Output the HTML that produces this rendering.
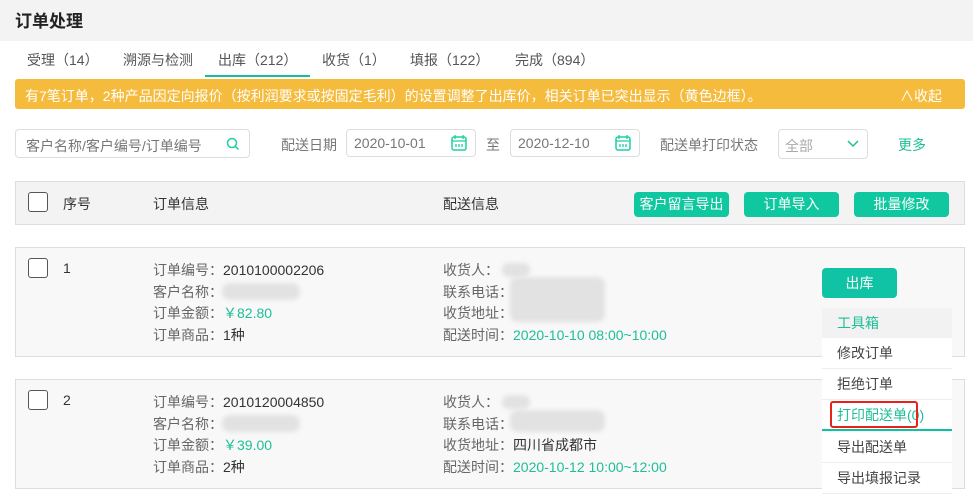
<!DOCTYPE html>
<html><head><meta charset="utf-8"><style>
*{margin:0;padding:0;box-sizing:border-box}
html,body{width:973px;height:502px;overflow:hidden}
body{background:#fff;font-family:"Liberation Sans","Noto Sans CJK SC",sans-serif;font-size:14px;color:#333;position:relative}
.a{position:absolute;white-space:nowrap}
.g{color:#666}
.t{color:#1dbf98}
.btn{position:absolute;background:#0fc8a0;color:#fff;border-radius:4px;text-align:center}
.inp{position:absolute;border:1px solid #ddd;border-radius:4px;background:#fff}
.cb{position:absolute;width:20px;height:20px;border:1.5px solid #555;border-radius:3px;background:#fff}
.blur{position:absolute;background:#e2e2e2;border-radius:8px;filter:blur(2px)}
.mi{position:absolute;left:822px;width:130px;height:31px;background:#fff;border-bottom:1px solid #eee;padding-left:15px;line-height:30px;color:#444}
</style></head><body>
<div class="a" style="left:0;top:0;width:973px;height:41px;background:#f3f3f3"></div>
<div class="a" style="left:15px;top:7px;font-size:17px;font-weight:bold;color:#222">订单处理</div>
<div class="a g" style="left:27px;top:50px;color:#555">受理（14）</div>
<div class="a g" style="left:123px;top:50px;color:#555">溯源与检测</div>
<div class="a" style="left:218px;top:50px;color:#555">出库（212）</div>
<div class="a" style="left:205px;top:75px;width:105px;height:2px;background:#10c0a0"></div>
<div class="a g" style="left:322px;top:50px;color:#555">收货（1）</div>
<div class="a g" style="left:410px;top:50px;color:#555">填报（122）</div>
<div class="a g" style="left:515px;top:50px;color:#555">完成（894）</div>
<div class="a" style="left:15px;top:79px;width:950px;height:30px;background:#f5bb3c;border-radius:3px"></div>
<div class="a" style="left:25px;top:86px;color:#fff;font-size:14px">有7笔订单，2种产品因定向报价（按利润要求或按固定毛利）的设置调整了出库价，相关订单已突出显示（黄色边框）。</div>
<div class="a" style="left:900px;top:86px;color:#fff">∧收起</div>
<div class="inp" style="left:15px;top:129px;width:235px;height:29px"></div>
<div class="a" style="left:26px;top:136px;color:#777">客户名称/客户编号/订单编号</div>
<svg class="a" style="left:226px;top:137px" width="14" height="14"><circle cx="6" cy="6" r="4.5" fill="none" stroke="#1dd0a0" stroke-width="1.5"/><path d="M9.5 9.5L12.5 12.5" stroke="#1dd0a0" stroke-width="1.5"/></svg>
<div class="a g" style="left:281px;top:135px;color:#777">配送日期</div>
<div class="inp" style="left:346px;top:129px;width:130px;height:28px"></div>
<div class="a" style="left:354px;top:135px;color:#777">2020-10-01</div>
<svg class="a" style="left:451px;top:134px" width="16" height="17"><rect x="1" y="3" width="14" height="13" rx="2" fill="none" stroke="#1dd0a0" stroke-width="1.5"/><path d="M4 1v4M12 1v4M1 7h14M5 10v3M8 10v3M11 10v3" stroke="#1dd0a0" stroke-width="1.3"/></svg>
<div class="a" style="left:486px;top:135px;color:#777">至</div>
<div class="inp" style="left:510px;top:129px;width:130px;height:28px"></div>
<div class="a" style="left:518px;top:135px;color:#777">2020-12-10</div>
<svg class="a" style="left:615px;top:134px" width="16" height="17"><rect x="1" y="3" width="14" height="13" rx="2" fill="none" stroke="#1dd0a0" stroke-width="1.5"/><path d="M4 1v4M12 1v4M1 7h14M5 10v3M8 10v3M11 10v3" stroke="#1dd0a0" stroke-width="1.3"/></svg>
<div class="a" style="left:660px;top:135px;color:#777">配送单打印状态</div>
<div class="inp" style="left:778px;top:129px;width:90px;height:30px"></div>
<div class="a" style="left:785px;top:136px;color:#aaa">全部</div>
<svg class="a" style="left:847px;top:140px" width="12" height="8"><path d="M1 1l5 5 5-5" fill="none" stroke="#1dbf98" stroke-width="1.5"/></svg>
<div class="a t" style="left:898px;top:135px">更多</div>
<div class="a" style="left:15px;top:181px;width:950px;height:44px;background:#f3f3f3;border:1px solid #ddd"></div>
<div class="cb" style="left:28px;top:192px"></div>
<div class="a" style="left:63px;top:194px">序号</div>
<div class="a" style="left:153px;top:194px">订单信息</div>
<div class="a" style="left:443px;top:194px">配送信息</div>
<div class="btn" style="left:634px;top:192px;width:95px;height:25px;line-height:25px">客户留言导出</div>
<div class="btn" style="left:744px;top:192px;width:95px;height:25px;line-height:25px">订单导入</div>
<div class="btn" style="left:854px;top:192px;width:95px;height:25px;line-height:25px">批量修改</div>

<div class="a" style="left:15px;top:247px;width:950px;height:110px;background:#f8f8f8;border:1px solid #ddd"></div>
<div class="cb" style="left:28px;top:258px"></div>
<div class="a" style="left:63px;top:260px">1</div>
<div class="a g" style="left:153px;top:260px;line-height:21.5px">订单编号：<span style="color:#333">2010100002206</span><br>客户名称：<br>订单金额：<span class="t">￥82.80</span><br>订单商品：<span style="color:#333">1种</span></div>
<div class="blur" style="left:222px;top:283px;width:78px;height:17px"></div>
<div class="a g" style="left:443px;top:260px;line-height:21.5px">收货人：<br>联系电话：<br>收货地址：<br>配送时间：<span class="t">2020-10-10 08:00~10:00</span></div>
<div class="blur" style="left:502px;top:263px;width:28px;height:14px"></div>
<div class="blur" style="left:510px;top:277px;width:95px;height:45px"></div>
<div class="btn" style="left:822px;top:268px;width:75px;height:30px;line-height:30px;background:#10c3a5">出库</div>

<div class="a" style="left:15px;top:379px;width:950px;height:110px;background:#f8f8f8;border:1px solid #ddd"></div>
<div class="cb" style="left:28px;top:390px"></div>
<div class="a" style="left:63px;top:392px">2</div>
<div class="a g" style="left:153px;top:392px;line-height:21.5px">订单编号：<span style="color:#333">2010120004850</span><br>客户名称：<br>订单金额：<span class="t">￥39.00</span><br>订单商品：<span style="color:#333">2种</span></div>
<div class="blur" style="left:222px;top:415px;width:78px;height:17px"></div>
<div class="a g" style="left:443px;top:392px;line-height:21.5px">收货人：<br>联系电话：<br>收货地址：<span style="color:#333">四川省成都市</span><br>配送时间：<span class="t">2020-10-12 10:00~12:00</span></div>
<div class="blur" style="left:502px;top:395px;width:28px;height:14px"></div>
<div class="blur" style="left:510px;top:410px;width:95px;height:22px"></div>

<div class="a" style="left:822px;top:308px;width:130px;height:30px;background:#f2f2f2;padding-left:15px;line-height:30px;color:#1dbf98">工具箱</div>
<div class="mi" style="top:338px">修改订单</div>
<div class="mi" style="top:369px">拒绝订单</div>
<div class="mi" style="top:400px;color:#1dbf98;border-bottom:2px solid #10c0a0">打印配送单(0)</div>
<div class="a" style="left:830px;top:401px;width:88px;height:27px;border:2px solid #e8211a;border-radius:3px"></div>
<div class="mi" style="top:432px">导出配送单</div>
<div class="mi" style="top:463px">导出填报记录</div>
<div class="mi" style="top:494px"></div>
</body></html>
